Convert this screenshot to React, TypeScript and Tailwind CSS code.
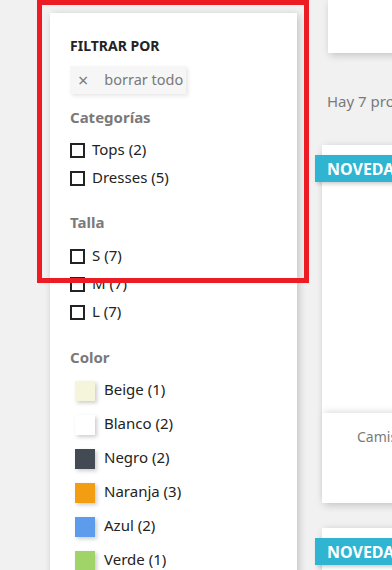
import React from "react";

const CATEGORIES = ["Tops (2)", "Dresses (5)"];
const SIZES = ["S (7)", "M (7)", "L (7)"];
const COLORS = [
  { label: "Beige (1)", hex: "#f5f5dc" },
  { label: "Blanco (2)", hex: "#ffffff" },
  { label: "Negro (2)", hex: "#434a54" },
  { label: "Naranja (3)", hex: "#f39d13" },
  { label: "Azul (2)", hex: "#5d9cec" },
  { label: "Verde (1)", hex: "#a0d468" },
];

function CheckRow({ label }: { label: string }) {
  return (
    <div className="flex items-start h-[28px]">
      <span className="w-[15px] h-[15px] border-2 border-[#232323] mt-[8px] shrink-0" />
      <span className="ml-[7px] text-[15px] leading-[28px] text-[#232323]">{label}</span>
    </div>
  );
}

function Heading({ children }: { children: React.ReactNode }) {
  return <p className="text-[15px] leading-[20px] font-bold text-[#7a7a7a]">{children}</p>;
}

function ProductCard({ title }: { title?: string }) {
  return (
    <div className="relative ml-[7px] w-[230px] bg-white shadow-[2px_2px_8px_0_rgba(0,0,0,0.2)]">
      <span className="absolute left-[-7px] top-[10px] h-[27px] pl-[12px] pr-[10px] flex items-center bg-[#2fb5d2] text-white text-[16px] font-bold uppercase shadow-[2px_2px_4px_0_rgba(0,0,0,0.2)]">
        Novedad
      </span>
      <div className="h-[268px]" />
      {title && (
        <div className="h-[90px] bg-white shadow-[0_-4px_6px_-2px_rgba(0,0,0,0.12)] pl-[35px] pt-[14px]">
          <p className="text-[14px] leading-[20px] text-[#7a7a7a]">{title}</p>
        </div>
      )}
    </div>
  );
}

export default function App() {
  return (
    <div
      className="relative w-[392px] h-[570px] overflow-hidden bg-[#f1f1f1] flex"
      style={{ fontFamily: "'Noto Sans', 'Open Sans', sans-serif" }}
    >
      {/* Filters panel */}
      <div className="ml-[50px] mt-[13px] w-[247px] shrink-0 bg-white shadow-[2px_2px_8px_0_rgba(0,0,0,0.2)] pl-[20px] pt-[23px] h-[600px]">
        <p className="text-[14px] leading-[20px] font-bold text-[#232323] uppercase">Filtrar por</p>
        <button className="mt-[10px] h-[28px] w-[116px] flex items-center bg-[#f6f6f6] shadow-[2px_2px_4px_0_rgba(0,0,0,0.1)] text-[#7a7a7a]">
          <span className="ml-[8px] text-[18px] leading-none">×</span>
          <span className="ml-[16px] text-[14.5px]">borrar todo</span>
        </button>

        <div className="mt-[13px]">
          <Heading>Categorías</Heading>
        </div>
        <div className="mt-[8px]">
          {CATEGORIES.map((c) => (
            <CheckRow key={c} label={c} />
          ))}
        </div>

        <div className="mt-[21px]">
          <Heading>Talla</Heading>
        </div>
        <div className="mt-[9px]">
          {SIZES.map((s) => (
            <CheckRow key={s} label={s} />
          ))}
        </div>

        <div className="mt-[22px]">
          <Heading>Color</Heading>
        </div>
        <div className="mt-[5px]">
          {COLORS.map((c) => (
            <div key={c.label} className="flex items-start h-[34px]">
              <span
                className="ml-[5px] mt-[9px] w-[20px] h-[20px] shrink-0 shadow-[2px_2px_4px_0_rgba(0,0,0,0.2)]"
                style={{ backgroundColor: c.hex }}
              />
              <span className="ml-[9px] text-[15px] leading-[34px] text-[#232323]">{c.label}</span>
            </div>
          ))}
        </div>
      </div>

      {/* Products column */}
      <div className="ml-[18px] w-[250px] shrink-0">
        <div className="ml-[13px] h-[53px] bg-white shadow-[2px_2px_8px_0_rgba(0,0,0,0.2)]" />
        <p className="ml-[12px] mt-[38px] text-[15px] leading-[20px] text-[#7a7a7a] whitespace-nowrap">
          Hay 7 productos.
        </p>
        <div className="mt-[34px]">
          <ProductCard title="Camiseta" />
        </div>
        <div className="mt-[25px]">
          <ProductCard />
        </div>
      </div>

      {/* Highlight overlay */}
      <div className="absolute left-[37px] top-0 w-[272px] h-[283px] border-[5px] border-[#ed1c24] pointer-events-none" />
    </div>
  );
}
